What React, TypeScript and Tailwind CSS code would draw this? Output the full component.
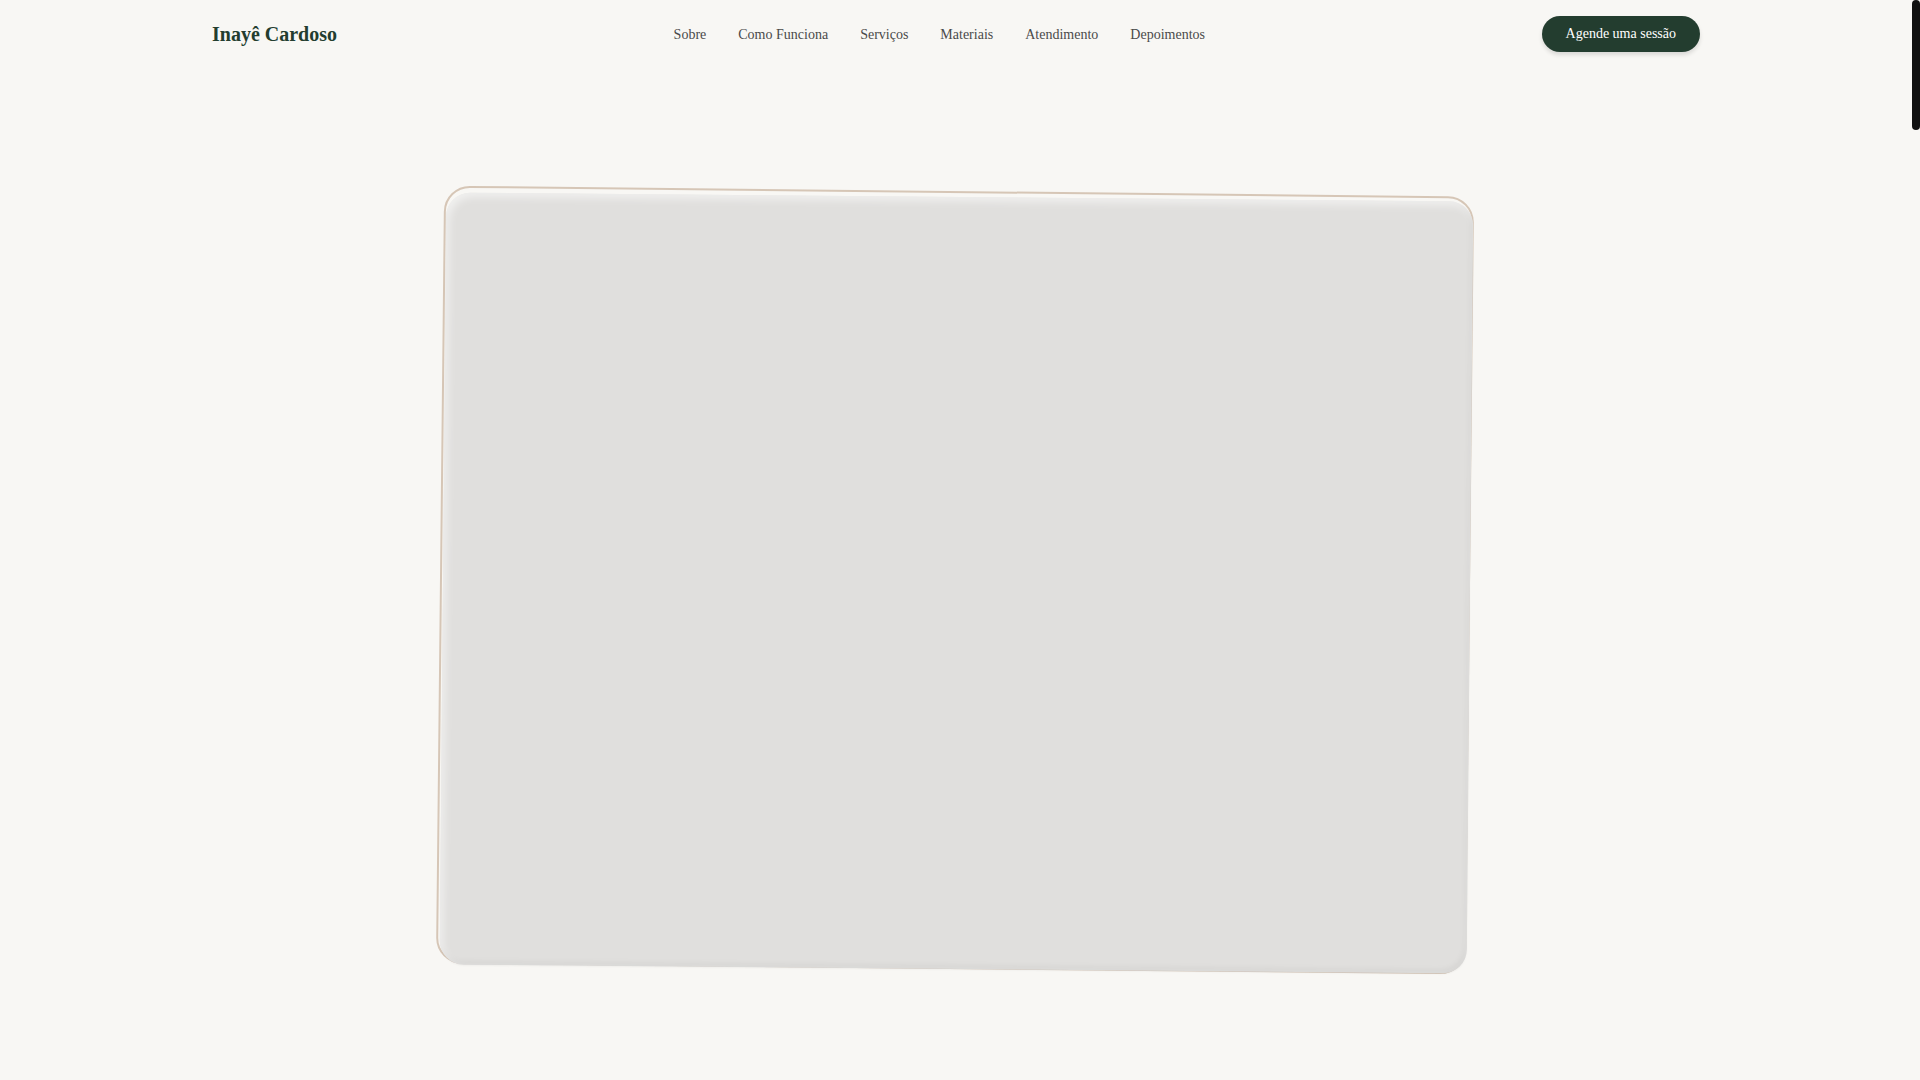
import React from 'react';

const links = ['Sobre', 'Como Funciona', 'Serviços', 'Materiais', 'Atendimento', 'Depoimentos'];

const App: React.FC = () => {
  return (
    <div
      className="relative h-screen overflow-hidden bg-[#f8f7f4] text-[#2b2b2b]"
      style={{ fontFamily: '"Liberation Serif", "Times New Roman", serif' }}
    >
      <div className="mr-2 h-full overflow-y-auto">
        {/* Header */}
        <header className="sticky top-0 z-20 bg-[#f8f7f4]">
          <div className="mx-auto flex h-[68px] w-full max-w-[1488px] items-center justify-between">
            <a href="#!" className="text-[20px] font-bold text-[#233d2f]">Inayê Cardoso</a>
            <nav className="flex items-center gap-8">
              {links.map((l) => (
                <a key={l} href="#!" className="text-[14px] text-[#4a4a4a] hover:text-[#233d2f]">
                  {l}
                </a>
              ))}
            </nav>
            <button className="rounded-full bg-[#233d2f] px-6 py-2 text-[14px] leading-5 text-white shadow-[0_3px_4px_rgba(0,0,0,0.12)]">
              Agende uma sessão
            </button>
          </div>
        </header>

        {/* Hero image placeholder */}
        <section className="flex justify-center pt-[129px] pb-24">
          <div className="relative w-[1027px] h-[772px]">
            <div className="absolute -top-[6px] -left-[3px] right-0 bottom-0 rounded-[26px] border-2 border-[#d6c6b6] rotate-[0.6deg]"></div>
            <div className="absolute inset-0 rounded-[24px] bg-[#e0dfdd] rotate-[0.5deg] shadow-[inset_3px_4px_8px_rgba(255,255,255,0.55),inset_-2px_-3px_6px_rgba(0,0,0,0.05),0_1px_2px_rgba(0,0,0,0.04)]"></div>
          </div>
        </section>

        {/* Below the fold */}
        {links.map((l) => (
          <section key={l} id={l} className="min-h-[1300px]"></section>
        ))}
      </div>

      {/* Scrollbar thumb */}
      <div className="pointer-events-none absolute right-0 top-0 h-[130px] w-2 rounded-full bg-[#111111]"></div>
    </div>
  );
};

export default App;
